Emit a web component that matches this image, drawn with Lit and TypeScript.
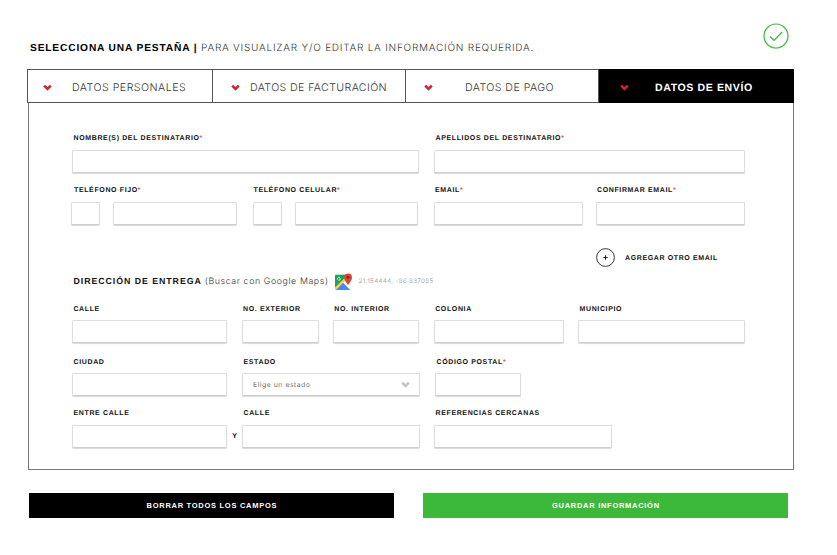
import { LitElement, html, css, svg, nothing } from "lit";
import { customElement, property } from "lit/decorators.js";
import { classMap } from "lit/directives/class-map.js";
import { styleMap } from "lit/directives/style-map.js";

const chevron = html`<svg class="chevron" viewBox="0 0 9 7" aria-hidden="true">
  <path d="M1.2 1.6 4.5 4.9 7.8 1.6" fill="none" stroke="currentColor" stroke-width="2.6" />
</svg>`;

@customElement("form-field")
class FormField extends LitElement {
  static styles = css`
    :host { display: flex; flex-direction: column; min-width: 0; text-rendering: geometricPrecision; }
    .label {
      font: bold 7px/12px "Liberation Sans", Arial, sans-serif;
      color: #111;
      white-space: nowrap;
      padding-left: var(--label-inset, 1.5px);
      margin-bottom: var(--label-gap, 4px);
    }
    .required { color: #e0535a; }
    .boxes { display: flex; gap: 12.5px; margin-left: var(--box-shift, 0); }
    .box {
      box-sizing: border-box;
      flex: 1;
      min-width: 0;
      width: 100%;
      height: 23px;
      padding: 0 9px 0 10px;
      border: 1px solid #dcdddd;
      border-bottom-color: #cfcfcf;
      border-radius: 1.5px;
      background: #fff;
      box-shadow: 0 1px 1px #dadada;
      outline: none;
    }
    .prefix { flex: 0 0 29px; padding: 0 4px; }
    .select {
      display: flex;
      align-items: center;
      justify-content: space-between;
      font: 300 7px/10px Inter, "Liberation Sans", sans-serif;
      letter-spacing: 0.5px;
      color: #444;
    }
    .choice { padding-top: 1px; }
    .select .chevron { width: 9px; height: 7px; color: #c3c3c3; }
  `;

  @property() label = "";
  @property({ type: Number }) spacing = 0.63;
  @property({ type: Boolean }) required = false;
  @property({ type: Boolean }) prefixed = false;
  @property() choice = "";

  render() {
    return html`
      <label class="label" style=${styleMap({ letterSpacing: `${this.spacing}px` })}
        >${this.label}${this.required ? html`<span class="required">*</span>` : nothing}</label>
      <div class="boxes">
        ${this.prefixed ? html`<input class="box prefix" />` : nothing}
        ${this.choice
          ? html`<div class="box select"><span class="choice">${this.choice}</span>${chevron}</div>`
          : html`<input class="box" />`}
      </div>
    `;
  }
}

const tabs = [
  { name: "DATOS PERSONALES", kind: "personal" },
  { name: "DATOS DE FACTURACIÓN", kind: "billing" },
  { name: "DATOS DE PAGO", kind: "payment" },
  { name: "DATOS DE ENVÍO", kind: "shipping" },
];

const mapsIcon = svg`
  <clipPath id="tile"><rect x="0" y="1.5" width="15.5" height="15.5" rx="1.3" /></clipPath>
  <g clip-path="url(#tile)">
    <rect y="1.5" width="15.5" height="15.5" fill="#dfe1e2" />
    <path d="M0 1.5H15.5L0 17Z" fill="#1fa05c" />
    <path d="M0 14.6 10.4 4.2 12.6 6.4 2 17H0Z" fill="#fbd04b" />
    <path d="M1 17 8.2 9.8 15.5 17Z" fill="#4a86ec" />
    <path d="M8.2 9.8 10 8 15.5 13.6V17Z" fill="#fff" />
  </g>
  <path d="M13 12.8C12.7 9.8 9.2 8.2 9.2 4.4A3.9 3.9 0 0 1 17 4.4C17 8.2 13.4 9.8 13 12.8Z" fill="#dc4437" />
  <circle cx="13.1" cy="4.4" r="1.4" fill="#7d2a25" />
  <path d="M5.1 4.7A1.5 1.5 0 1 0 5.5 5.9H4.2" fill="none" stroke="#fff" stroke-width=".7" />
`;

@customElement("app-root")
class AppRoot extends LitElement {
  static styles = css`
    :host {
      display: block;
      width: 837px;
      height: 555px;
      overflow: hidden;
      background: #fff;
      font-family: "Liberation Sans", Arial, sans-serif;
      text-rendering: geometricPrecision;
    }
    .header {
      display: flex;
      justify-content: space-between;
      height: 46px;
      padding: 23px 48px 0 30px;
    }
    .title {
      margin: 18px 0 0;
      font-size: 10.2px;
      line-height: 14px;
      font-weight: bold;
      letter-spacing: 0.85px;
      white-space: pre;
      color: #000;
    }
    .hint { font: 300 10px/14px Inter, sans-serif; letter-spacing: 0.77px; color: #333; }
    .done { width: 26px; height: 26px; }
    .tabs {
      display: grid;
      grid-template-columns: 186px 193px 193px 195px;
      width: 767px;
      height: 34px;
      margin-left: 27px;
    }
    .tab {
      box-sizing: border-box;
      display: flex;
      align-items: center;
      padding: 3px 0 0 15px;
      border: solid #555;
      border-width: 1px 1px 1px 0;
      font: 300 10.6px/14px Inter, sans-serif;
      letter-spacing: 0.45px;
      color: #333;
      white-space: nowrap;
    }
    .tab .chevron { flex: none; width: 9px; height: 7px; color: #d3232f; }
    .personal { border-left-width: 1px; }
    .personal .name { margin-left: 20px; letter-spacing: 0.5px; }
    .billing { padding-left: 18px; }
    .billing .name { margin-left: 10px; letter-spacing: 0.4px; }
    .payment { padding-left: 18px; }
    .payment .name { margin-left: 32px; }
    .shipping { padding-left: 21px; }
    .shipping .name { margin-left: 26px; letter-spacing: 0.58px; }
    .active {
      background: #000;
      border-color: #000;
      color: #fff;
      font: bold 10.6px/14px "Liberation Sans", sans-serif;
    }
    .panel {
      box-sizing: border-box;
      width: 766px;
      height: 367px;
      margin-left: 28px;
      padding: 30px 0 0 43px;
      border: solid #777;
      border-width: 0 1px 1px;
    }
    .row { display: grid; }
    .names { grid-template-columns: 347px 311px; column-gap: 15px; --label-gap: 5px; }
    .contact {
      grid-template-columns: 165px 165px 149px 149px;
      column-gap: 14px;
      justify-content: start;
      margin-top: 12px;
      --label-gap: 5px;
    }
    .contact .phone { --box-shift: -1px; --label-inset: 2px; }
    .contact .mobile { margin-left: 2px; margin-right: -2px; --label-inset: 0.5px; }
    .contact .mail { margin-left: 4px; margin-right: -4px; --label-inset: 1px; }
    .contact .confirm { margin-left: 3px; margin-right: -3px; --label-inset: 1px; }
    .more {
      display: flex;
      align-items: center;
      margin: 23px 0 0 524px;
      height: 19px;
      font-weight: bold;
      font-size: 7px;
      letter-spacing: 0.62px;
      color: #111;
    }
    .more span { padding-top: 2px; }
    .plus { width: 19px; height: 19px; margin-right: 10px; }
    .delivery {
      display: flex;
      align-items: center;
      height: 18px;
      margin: 5px 0 14px 1.5px;
      white-space: pre;
    }
    .section { font-weight: bold; font-size: 8.8px; letter-spacing: 0.94px; color: #111; }
    .search { padding-top: 1px; font: 300 8.8px/12px Inter, sans-serif; letter-spacing: 0.6px; color: #333; }
    .maps { width: 17px; height: 17px; margin: 0 7px 0 6px; }
    .coords { padding-top: 2px; font: 300 6.2px/10px Inter, sans-serif; letter-spacing: 0.42px; color: #888; }
    .address {
      grid-template-columns: 155.2px 77px 86.4px 130px 166.6px;
      column-gap: 14.4px;
      --label-inset: 1.4px;
    }
    .city { grid-template-columns: 155px 178px 86px; column-gap: 15px; margin-top: 14px; }
    .streets {
      grid-template-columns: 155px 15px 178px 178px;
      margin-top: 12px;
      --label-gap: 5px;
    }
    .streets .references { margin-left: 14px; margin-right: -14px; }
    .and { align-self: end; margin-bottom: 6px; text-align: center; font: bold 7px/10px "Liberation Sans", sans-serif; }
    .actions { display: flex; gap: 29px; padding: 23px 0 0 29.4px; }
    .action {
      width: 365px;
      height: 25px;
      padding: 0;
      border: 0;
      background: #000;
      color: #fff;
      font: bold 7.5px/25px "Liberation Sans", sans-serif;
      letter-spacing: 0.72px;
    }
    .save { background: #3cb93a; }
  `;

  render() {
    return html`
      <header class="header">
        <h1 class="title">SELECCIONA UNA PESTAÑA | <span class="hint">PARA VISUALIZAR Y/O EDITAR LA INFORMACIÓN REQUERIDA.</span></h1>
        <svg class="done" viewBox="0 0 26 26" fill="none" stroke="#3cb93a">
          <circle cx="13" cy="13" r="12" stroke-width="1.2" />
          <path d="M6.9 13.5 11 17.3 19.2 9" stroke-width="1.2" />
        </svg>
      </header>
      <nav class="tabs">
        ${tabs.map(
          (tab) => html`<div class=${classMap({ tab: true, [tab.kind]: true, active: tab.kind === "shipping" })}>
            ${chevron}<span class="name">${tab.name}</span>
          </div>`
        )}
      </nav>
      <main class="panel">
        <div class="row names">
          <form-field label="NOMBRE(S) DEL DESTINATARIO" required></form-field>
          <form-field label="APELLIDOS DEL DESTINATARIO" required></form-field>
        </div>
        <div class="row contact">
          <form-field class="phone" label="TELÉFONO FIJO" required prefixed></form-field>
          <form-field class="mobile" label="TELÉFONO CELULAR" required prefixed></form-field>
          <form-field class="mail" label="EMAIL" required></form-field>
          <form-field class="confirm" label="CONFIRMAR EMAIL" required></form-field>
        </div>
        <div class="more">
          <svg class="plus" viewBox="0 0 19 19" fill="none" stroke="#222">
            <circle cx="9.5" cy="9.5" r="8.9" stroke-width=".9" />
            <path d="M7.3 9.5H11.7M9.5 7.3V11.7" stroke-width="1.1" />
          </svg>
          <span>AGREGAR OTRO EMAIL</span>
        </div>
        <div class="delivery">
          <span class="section">DIRECCIÓN DE ENTREGA </span><span class="search">(Buscar con Google Maps)</span>
          <svg class="maps" viewBox="0 0 17 17">${mapsIcon}</svg>
          <span class="coords">21.154444, -86.837085</span>
        </div>
        <div class="row address">
          <form-field label="CALLE"></form-field>
          <form-field label="NO. EXTERIOR"></form-field>
          <form-field label="NO. INTERIOR"></form-field>
          <form-field label="COLONIA"></form-field>
          <form-field label="MUNICIPIO"></form-field>
        </div>
        <div class="row city">
          <form-field label="CIUDAD"></form-field>
          <form-field label="ESTADO" choice="Elige un estado"></form-field>
          <form-field label="CÓDIGO POSTAL" required></form-field>
        </div>
        <div class="row streets">
          <form-field label="ENTRE CALLE"></form-field>
          <span class="and">Y</span>
          <form-field label="CALLE"></form-field>
          <form-field class="references" label="REFERENCIAS CERCANAS"></form-field>
        </div>
      </main>
      <footer class="actions">
        <button class="action">BORRAR TODOS LOS CAMPOS</button>
        <button class="action save">GUARDAR INFORMACIÓN</button>
      </footer>
    `;
  }
}
